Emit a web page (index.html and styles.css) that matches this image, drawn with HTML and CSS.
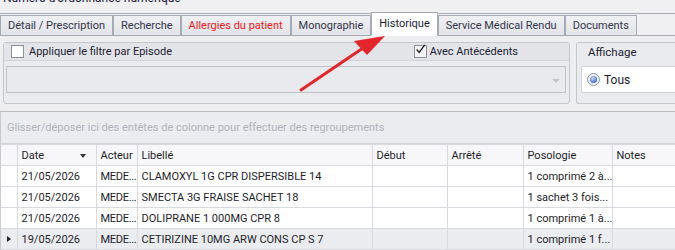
FILE: index.html
```html
<!DOCTYPE html>
<html lang="fr">
<head>
    <meta charset="UTF-8">
    <title>Historique</title>
    <link rel="stylesheet" href="styles.css">
</head>
<body>
    <!-- Titre coupé en haut -->
    <div class="top-strip">
        <span class="top-title">Numéro d'ordonnance numérique</span>
    </div>

    <!-- Onglets -->
    <div class="tabs">
        <div class="tab">Détail / Prescription</div>
        <div class="tab">Recherche</div>
        <div class="tab tab-red">Allergies du patient</div>
        <div class="tab">Monographie</div>
        <div class="tab active">Historique</div>
        <div class="tab">Service Médical Rendu</div>
        <div class="tab">Documents</div>
    </div>

    <div class="panel">
        <div class="filters">
            <!-- Filtre par épisode -->
            <div class="group group-episode">
                <div class="group-head">
                    <label class="check"><span class="box"></span>Appliquer le filtre par Episode</label>
                    <label class="check check-right"><span class="box checked">
                        <svg width="13" height="13" viewBox="0 0 13 13"><path d="M2 6.5 L5 10 L11.5 1" fill="none" stroke="#222" stroke-width="1.6"/></svg>
                    </span>Avec Antécédents</label>
                </div>
                <div class="group-body">
                    <div class="combo"><span class="combo-arrow"></span></div>
                </div>
            </div>

            <!-- Affichage -->
            <div class="group group-view">
                <div class="group-head">Affichage</div>
                <div class="group-body">
                    <div class="radio-box">
                        <span class="radio"><span class="radio-dot"></span></span>Tous
                    </div>
                </div>
            </div>
        </div>

        <!-- Grille -->
        <div class="grid">
            <div class="group-zone">Glisser/déposer ici des entêtes de colonne pour effectuer des regroupements</div>
            <table>
                <colgroup>
                    <col class="c-ind"><col class="c-date"><col class="c-acteur"><col class="c-lib">
                    <col class="c-debut"><col class="c-arret"><col class="c-poso"><col>
                </colgroup>
                <thead>
                    <tr>
                        <th></th>
                        <th class="sorted">Date<span class="sort-arrow"></span></th>
                        <th>Acteur</th>
                        <th>Libellé</th>
                        <th>Début</th>
                        <th>Arrêté</th>
                        <th>Posologie</th>
                        <th>Notes</th>
                    </tr>
                </thead>
                <tbody>
                    <tr>
                        <td></td><td>21/05/2026</td><td class="acteur">MEDE...</td><td>CLAMOXYL 1G CPR DISPERSIBLE 14</td>
                        <td></td><td></td><td>1 comprimé 2 à...</td><td></td>
                    </tr>
                    <tr>
                        <td></td><td>21/05/2026</td><td class="acteur">MEDE...</td><td>SMECTA 3G FRAISE SACHET 18</td>
                        <td></td><td></td><td>1 sachet 3 fois...</td><td></td>
                    </tr>
                    <tr>
                        <td></td><td>21/05/2026</td><td class="acteur">MEDE...</td><td>DOLIPRANE 1 000MG CPR 8</td>
                        <td></td><td></td><td>1 comprimé 1 à...</td><td></td>
                    </tr>
                    <tr class="focused">
                        <td><span class="row-ind"></span></td><td>19/05/2026</td><td class="acteur">MEDE...</td><td>CETIRIZINE 10MG ARW CONS CP S 7</td>
                        <td></td><td></td><td>1 comprimé 1 f...</td><td></td>
                    </tr>
                </tbody>
            </table>
        </div>
    </div>

    <!-- Flèche rouge d'annotation -->
    <svg class="annot-arrow" width="675" height="250" viewBox="0 0 675 250">
        <line x1="301" y1="90" x2="366" y2="46" stroke="#e4262b" stroke-width="3" stroke-linecap="round"/>
        <polygon points="385,36 354,41 367,55" fill="#e4262b"/>
    </svg>
</body>
</html>
```

FILE: styles.css
```css
* {
    margin: 0;
    padding: 0;
    box-sizing: border-box;
}

body {
    width: 675px;
    height: 250px;
    overflow: hidden;
    background: #eeeef1;
    font-family: Roboto, 'Liberation Sans', sans-serif;
    font-size: 11px;
    color: #2b2b33;
    position: relative;
}

/* Titre coupé */
.top-strip {
    height: 14px;
    background: #f0f0f2;
    border-bottom: 1px solid #a8aab2;
    overflow: hidden;
}

.top-title {
    display: block;
    margin-top: -9px;
    padding-left: 3px;
    font-size: 12px;
    color: #20203a;
}

/* Onglets */
.tabs {
    display: flex;
    align-items: flex-end;
    height: 22px;
    background: #f0f0f2;
    border-bottom: 1px solid #a8aab2;
}

.tab {
    height: 21px;
    margin-bottom: -1px;
    padding: 0 7px;
    line-height: 19px;
    border: 1px solid #a8aab2;
    background: linear-gradient(#eef0f3, #e2e4e8);
    color: #35354a;
    white-space: nowrap;
}

.tab-red {
    color: #f01818;
}

.tab.active {
    height: 24px;
    line-height: 21px;
    background: #ffffff;
    border-bottom-color: #ffffff;
    color: #1c1c2c;
}

/* Zone des filtres */
.panel {
    padding-top: 6px;
}

.filters {
    display: flex;
    gap: 6px;
    padding: 0 0 0 3px;
    height: 62px;
}

.group {
    border: 1px solid #c4c6cc;
    border-radius: 3px;
    background: #eaebee;
}

.group-episode {
    width: 567px;
}

.group-view {
    flex: 1;
    border-right: none;
    border-radius: 3px 0 0 3px;
}

.group-head {
    height: 18px;
    display: flex;
    align-items: center;
    padding-left: 7px;
    background: #e3e4e8;
    border-bottom: 1px solid #d3d4d9;
    color: #222233;
    font-size: 11px;
}

.group-view .group-head {
    padding-left: 11px;
    border-bottom: none;
    background: #eaebee;
    font-size: 11.5px;
}

.check {
    display: flex;
    align-items: center;
    gap: 5px;
}

.check-right {
    margin-left: auto;
    margin-right: 51px;
    gap: 3px;
}

.box {
    width: 13px;
    height: 13px;
    border: 1px solid #8f9199;
    background: #ffffff;
    display: flex;
}

.box.checked {
    background: #f3f3f5;
    overflow: visible;
}

.box.checked svg {
    margin: -3px 0 0 0;
}

.group-body {
    padding: 5px 3px 0 2px;
}

.combo {
    height: 27px;
    border: 1px solid #c0c2c8;
    background: #e9eaee;
    position: relative;
}

.combo-arrow {
    position: absolute;
    right: 5px;
    top: 12px;
    border-left: 4px solid transparent;
    border-right: 4px solid transparent;
    border-top: 4px solid #c2c3c8;
}

.group-view .group-body {
    padding: 5px 0 0 4px;
}

.radio-box {
    height: 27px;
    background: #ffffff;
    border: 1px solid #d0d2d8;
    border-right: none;
    display: flex;
    align-items: center;
    gap: 4px;
    padding-left: 5px;
    font-size: 12px;
    color: #1c1c2c;
}

.radio {
    width: 13px;
    height: 13px;
    border-radius: 50%;
    border: 1px solid #8d95a8;
    background: #eef0f4;
    display: flex;
    align-items: center;
    justify-content: center;
}

.radio-dot {
    width: 7px;
    height: 7px;
    border-radius: 50%;
    background: radial-gradient(circle at 40% 35%, #c8dcff, #3f6fd8 70%);
}

/* Grille */
.grid {
    margin-top: 7px;
    border-top: 1px solid #b8bac0;
    border-left: 1px solid #c8cacf;
}

.group-zone {
    height: 32px;
    line-height: 32px;
    padding-left: 6px;
    background: #ebecef;
    color: #b1b2ba;
    font-size: 11px;
    border-bottom: 1px solid #d6d7dc;
}

table {
    width: 675px;
    border-collapse: collapse;
    table-layout: fixed;
}

.c-ind { width: 16px; }
.c-date { width: 79px; }
.c-acteur { width: 41px; }
.c-lib { width: 235px; }
.c-debut { width: 75px; }
.c-arret { width: 76px; }
.c-poso { width: 89px; }

th, td {
    height: 21px;
    padding: 0 4px;
    border: 1px solid #d8d9de;
    text-align: left;
    font-weight: normal;
    white-space: nowrap;
    overflow: hidden;
    color: #1e1e2a;
}

th {
    background: #f7f7f9;
    height: 21px;
}

td {
    background: #ffffff;
}

td.acteur {
    padding: 0 0 0 4px;
    letter-spacing: -0.3px;
}

tr.focused td {
    background: #ebecef;
}

th:first-child, td:first-child {
    padding: 0;
    border-left: none;
}

.sorted {
    position: relative;
}

.sort-arrow {
    position: absolute;
    right: 10px;
    top: 9px;
    border-left: 3.5px solid transparent;
    border-right: 3.5px solid transparent;
    border-top: 4px solid #333;
}

.row-ind {
    display: block;
    margin-left: 6px;
    width: 0;
    height: 0;
    border-top: 3.5px solid transparent;
    border-bottom: 3.5px solid transparent;
    border-left: 4px solid #222;
}

/* Flèche d'annotation */
.annot-arrow {
    position: absolute;
    top: 0;
    left: 0;
    pointer-events: none;
}
```
